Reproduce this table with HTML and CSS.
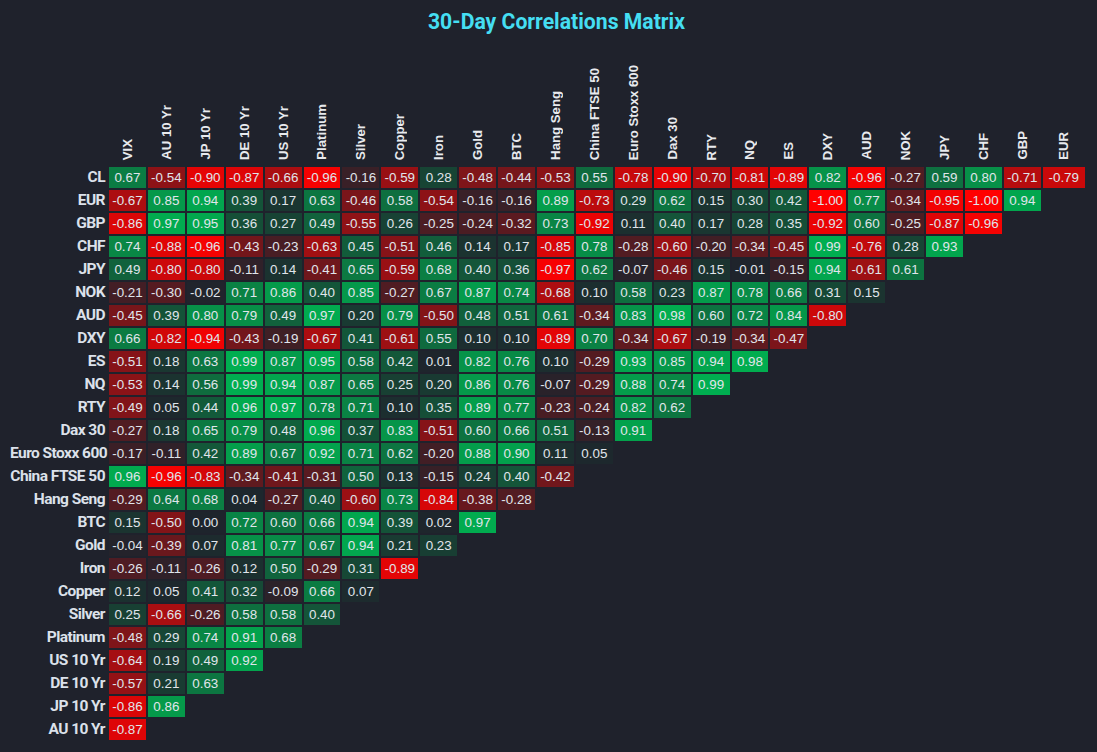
FILE: index.html
```html
<!DOCTYPE html>
<html lang="en">
<head>
<meta charset="utf-8">
<title>30-Day Correlations Matrix</title>
<link rel="stylesheet" href="styles.css">
</head>
<body>
<h1 class="title">30-Day Correlations Matrix</h1>
<div class="matrix" id="matrix"></div>
<script src="script.js"></script>
</body>
</html>
```

FILE: styles.css
```css
html, body {
  margin: 0;
  padding: 0;
  background: #1f222c;
}

body {
  width: 1097px;
  height: 752px;
  overflow: hidden;
  font-family: "Liberation Sans", Arial, sans-serif;
}

.title {
  margin: 0;
  height: 40px;
  padding-left: 16px;
  line-height: 44px;
  text-align: center;
  font-family: Roboto, "Liberation Sans", sans-serif;
  font-weight: 700;
  font-size: 21.2px;
  letter-spacing: 0;
  color: #45def2;
}

.matrix {
  display: grid;
  grid-template-columns: 97px repeat(24, 36.92px) 42px;
  grid-template-rows: 125px repeat(25, 21px);
  column-gap: 2px;
  row-gap: 2px;
  margin-left: 10px;
}

.corner {
  grid-column: 1;
}

.col-head {
  display: flex;
  align-items: flex-end;
  justify-content: center;
  padding-bottom: 5px;
}

.col-head span {
  writing-mode: vertical-rl;
  transform: rotate(180deg);
  font-family: "Liberation Sans", Arial, sans-serif;
  font-weight: 700;
  font-size: 13.2px;
  line-height: 15px;
  color: #e8eaee;
  white-space: nowrap;
}

.row-head {
  grid-column: 1;
  text-align: right;
  padding-right: 2px;
  font-family: Roboto, "Liberation Sans", sans-serif;
  font-weight: 700;
  font-size: 15.5px;
  letter-spacing: -0.55px;
  line-height: 21px;
  color: #dce1ea;
  white-space: nowrap;
}

.cell {
  text-align: center;
  font-size: 13.4px;
  line-height: 21px;
  color: #e0e5eb;
}
```

FILE: script.js
```js
(function () {
  var cols = ["VIX", "AU 10 Yr", "JP 10 Yr", "DE 10 Yr", "US 10 Yr", "Platinum", "Silver", "Copper", "Iron", "Gold", "BTC", "Hang Seng", "China FTSE 50", "Euro Stoxx 600", "Dax 30", "RTY", "NQ", "ES", "DXY", "AUD", "NOK", "JPY", "CHF", "GBP", "EUR"];
  var rows = [
    ["CL", [0.67, -0.54, -0.90, -0.87, -0.66, -0.96, -0.16, -0.59, 0.28, -0.48, -0.44, -0.53, 0.55, -0.78, -0.90, -0.70, -0.81, -0.89, 0.82, -0.96, -0.27, 0.59, 0.80, -0.71, -0.79]],
    ["EUR", [-0.67, 0.85, 0.94, 0.39, 0.17, 0.63, -0.46, 0.58, -0.54, -0.16, -0.16, 0.89, -0.73, 0.29, 0.62, 0.15, 0.30, 0.42, -1.00, 0.77, -0.34, -0.95, -1.00, 0.94]],
    ["GBP", [-0.86, 0.97, 0.95, 0.36, 0.27, 0.49, -0.55, 0.26, -0.25, -0.24, -0.32, 0.73, -0.92, 0.11, 0.40, 0.17, 0.28, 0.35, -0.92, 0.60, -0.25, -0.87, -0.96]],
    ["CHF", [0.74, -0.88, -0.96, -0.43, -0.23, -0.63, 0.45, -0.51, 0.46, 0.14, 0.17, -0.85, 0.78, -0.28, -0.60, -0.20, -0.34, -0.45, 0.99, -0.76, 0.28, 0.93]],
    ["JPY", [0.49, -0.80, -0.80, -0.11, 0.14, -0.41, 0.65, -0.59, 0.68, 0.40, 0.36, -0.97, 0.62, -0.07, -0.46, 0.15, -0.01, -0.15, 0.94, -0.61, 0.61]],
    ["NOK", [-0.21, -0.30, -0.02, 0.71, 0.86, 0.40, 0.85, -0.27, 0.67, 0.87, 0.74, -0.68, 0.10, 0.58, 0.23, 0.87, 0.78, 0.66, 0.31, 0.15]],
    ["AUD", [-0.45, 0.39, 0.80, 0.79, 0.49, 0.97, 0.20, 0.79, -0.50, 0.48, 0.51, 0.61, -0.34, 0.83, 0.98, 0.60, 0.72, 0.84, -0.80]],
    ["DXY", [0.66, -0.82, -0.94, -0.43, -0.19, -0.67, 0.41, -0.61, 0.55, 0.10, 0.10, -0.89, 0.70, -0.34, -0.67, -0.19, -0.34, -0.47]],
    ["ES", [-0.51, 0.18, 0.63, 0.99, 0.87, 0.95, 0.58, 0.42, 0.01, 0.82, 0.76, 0.10, -0.29, 0.93, 0.85, 0.94, 0.98]],
    ["NQ", [-0.53, 0.14, 0.56, 0.99, 0.94, 0.87, 0.65, 0.25, 0.20, 0.86, 0.76, -0.07, -0.29, 0.88, 0.74, 0.99]],
    ["RTY", [-0.49, 0.05, 0.44, 0.96, 0.97, 0.78, 0.71, 0.10, 0.35, 0.89, 0.77, -0.23, -0.24, 0.82, 0.62]],
    ["Dax 30", [-0.27, 0.18, 0.65, 0.79, 0.48, 0.96, 0.37, 0.83, -0.51, 0.60, 0.66, 0.51, -0.13, 0.91]],
    ["Euro Stoxx 600", [-0.17, -0.11, 0.42, 0.89, 0.67, 0.92, 0.71, 0.62, -0.20, 0.88, 0.90, 0.11, 0.05]],
    ["China FTSE 50", [0.96, -0.96, -0.83, -0.34, -0.41, -0.31, 0.50, 0.13, -0.15, 0.24, 0.40, -0.42]],
    ["Hang Seng", [-0.29, 0.64, 0.68, 0.04, -0.27, 0.40, -0.60, 0.73, -0.84, -0.38, -0.28]],
    ["BTC", [0.15, -0.50, 0.00, 0.72, 0.60, 0.66, 0.94, 0.39, 0.02, 0.97]],
    ["Gold", [-0.04, -0.39, 0.07, 0.81, 0.77, 0.67, 0.94, 0.21, 0.23]],
    ["Iron", [-0.26, -0.11, -0.26, 0.12, 0.50, -0.29, 0.31, -0.89]],
    ["Copper", [0.12, 0.05, 0.41, 0.32, -0.09, 0.66, 0.07]],
    ["Silver", [0.25, -0.66, -0.26, 0.58, 0.58, 0.40]],
    ["Platinum", [-0.48, 0.29, 0.74, 0.91, 0.68]],
    ["US 10 Yr", [-0.64, 0.19, 0.49, 0.92]],
    ["DE 10 Yr", [-0.57, 0.21, 0.63]],
    ["JP 10 Yr", [-0.86, 0.86]],
    ["AU 10 Yr", [-0.87]]
  ];

  function color(v) {
    var t = Math.pow(Math.abs(v), 1.15);
    var z = [30, 36, 44];
    var e = v < 0 ? [255, 0, 0] : [0, 176, 80];
    var c = z.map(function (zc, i) { return Math.round(zc + (e[i] - zc) * t); });
    return "rgb(" + c.join(",") + ")";
  }

  var m = document.getElementById("matrix");
  var corner = document.createElement("div");
  corner.className = "corner";
  m.appendChild(corner);
  cols.forEach(function (c) {
    var h = document.createElement("div");
    h.className = "col-head";
    var s = document.createElement("span");
    s.textContent = c;
    h.appendChild(s);
    m.appendChild(h);
  });
  rows.forEach(function (r) {
    var l = document.createElement("div");
    l.className = "row-head";
    l.textContent = r[0];
    m.appendChild(l);
    r[1].forEach(function (v) {
      var d = document.createElement("div");
      d.className = "cell";
      d.style.background = color(v);
      d.textContent = v.toFixed(2);
      m.appendChild(d);
    });
  });
})();
```
